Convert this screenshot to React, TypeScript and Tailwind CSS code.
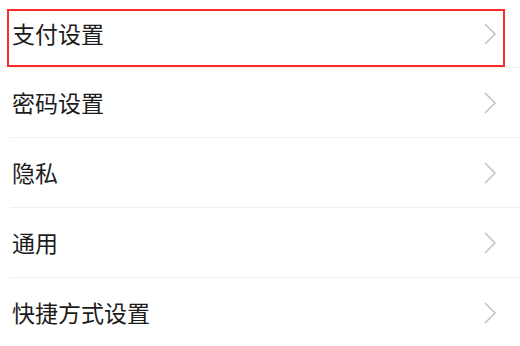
const items = ["支付设置", "密码设置", "隐私", "通用", "快捷方式设置"];

function Chevron() {
  return (
    <svg width="14" height="22" viewBox="0 0 14 22" className="shrink-0">
      <polyline points="2,1 12,11 2,21" fill="none" stroke="#c4c4c4" strokeWidth="1.6" />
    </svg>
  );
}

export default function App() {
  return (
    <div
      className="relative h-[346px] w-[520px] overflow-hidden bg-white"
      style={{ fontFamily: '"Noto Sans CJK SC", "Noto Sans", sans-serif' }}
    >
      <ul className="ml-[10px]">
        {items.map((label, i) => (
          <li
            key={label}
            className={
              i === 0
                ? "flex h-[67px] items-center justify-between pl-[2px] pr-[23px]"
                : "flex h-[70px] items-center justify-between border-t border-[#efefef] pl-[2px] pr-[23px]"
            }
          >
            <span className="text-[23px] leading-none text-[#1c1c1c]">{label}</span>
            <Chevron />
          </li>
        ))}
      </ul>
      {/* highlight annotation over the first row */}
      <div className="pointer-events-none absolute left-[7px] top-[9px] h-[58px] w-[498px] border-2 border-[#ff2a2a]" />
    </div>
  );
}
